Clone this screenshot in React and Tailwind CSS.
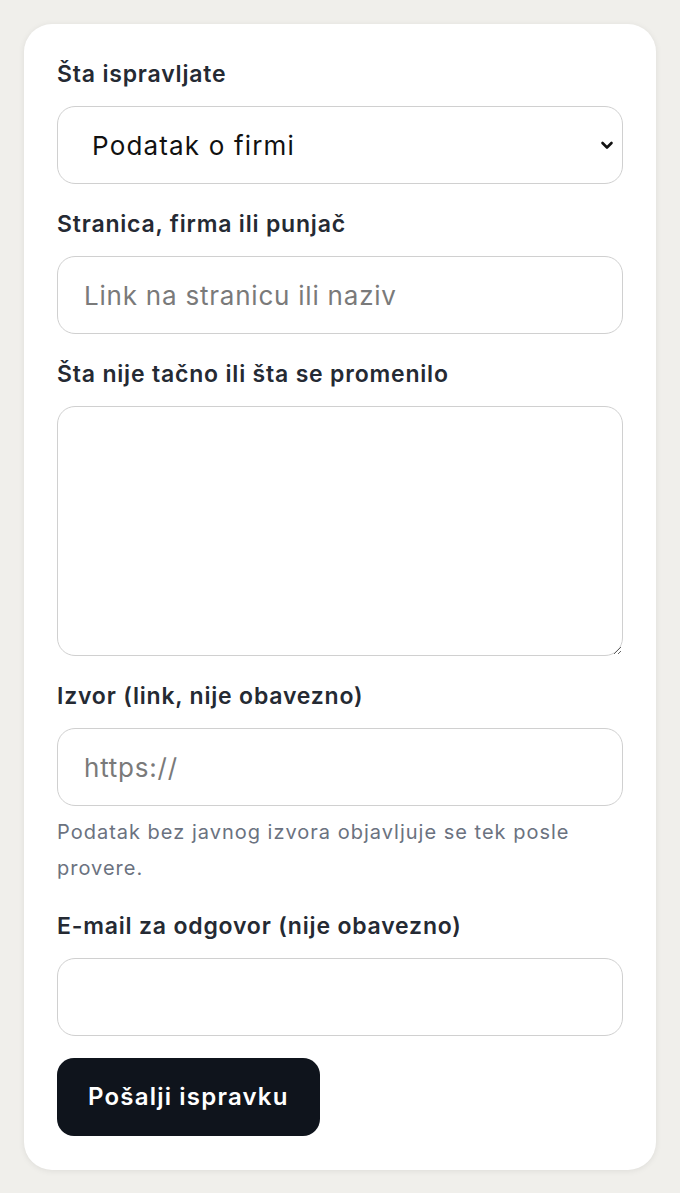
import { useState } from 'react'

const FONT = "font-['Inter','Noto_Sans',sans-serif]"

const fieldClass =
  'block w-full h-[78px] rounded-[18px] border-[1.5px] border-[#d0d0d0] bg-white px-[26px] text-[26px] tracking-[0.03em] text-[#111] placeholder:text-[#7a7a7a] outline-none'

function Label({ children, htmlFor }) {
  return (
    <label
      htmlFor={htmlFor}
      className="block mb-[15px] text-[23px] leading-[33px] font-semibold tracking-[0.035em] text-[#252a33]"
    >
      {children}
    </label>
  )
}

export default function App() {
  const [kind, setKind] = useState('firma')

  return (
    <div className={`min-h-screen bg-[#f0efeb] p-6 ${FONT}`}>
      <form
        onSubmit={(e) => e.preventDefault()}
        className="flex flex-col gap-6 rounded-[28px] bg-white px-[33px] pt-[34px] pb-[34px] shadow-[0_1px_6px_rgba(0,0,0,0.08)]"
      >
        {/* Vrsta ispravke */}
        <div>
          <Label htmlFor="kind">Šta ispravljate</Label>
          <div className="relative">
            <select
              id="kind"
              value={kind}
              onChange={(e) => setKind(e.target.value)}
              className={`${fieldClass} appearance-none !tracking-[0.045em] pl-[34px] pr-12`}
            >
              <option value="firma">Podatak o firmi</option>
              <option value="stranica">Stranica</option>
              <option value="punjac">Punjač</option>
            </select>
            <svg
              className="pointer-events-none absolute right-[9px] top-1/2 -translate-y-1/2"
              width="14"
              height="14"
              viewBox="0 0 14 14"
              fill="none"
            >
              <path d="M2.5 5l4.5 4.5L11.5 5" stroke="#111" strokeWidth="2.6" strokeLinecap="round" strokeLinejoin="round" />
            </svg>
          </div>
        </div>

        <div>
          <Label htmlFor="target">Stranica, firma ili punjač</Label>
          <input id="target" type="text" placeholder="Link na stranicu ili naziv" className={fieldClass} />
        </div>

        <div>
          <Label htmlFor="desc">Šta nije tačno ili šta se promenilo</Label>
          <textarea
            id="desc"
            className="block w-full h-[250px] rounded-[18px] border-[1.5px] border-[#d0d0d0] bg-white px-[26px] py-4 text-[26px] text-[#111] outline-none"
          />
        </div>

        <div>
          <Label htmlFor="source">Izvor (link, nije obavezno)</Label>
          <input id="source" type="url" placeholder="https://" className={fieldClass} />
          <p className="mt-2 text-[20px] leading-[36px] tracking-[0.05em] text-[#6b7280]">
            Podatak bez javnog izvora objavljuje se tek posle provere.
          </p>
        </div>

        <div>
          <Label htmlFor="email">E-mail za odgovor (nije obavezno)</Label>
          <input id="email" type="email" className={fieldClass} />
        </div>

        <div className="-mt-0.5">
          <button
            type="submit"
            className="h-[78px] rounded-[17px] bg-[#0f141c] px-[31px] text-[24px] font-semibold tracking-[0.05em] text-white"
          >
            Pošalji ispravku
          </button>
        </div>
      </form>
    </div>
  )
}
